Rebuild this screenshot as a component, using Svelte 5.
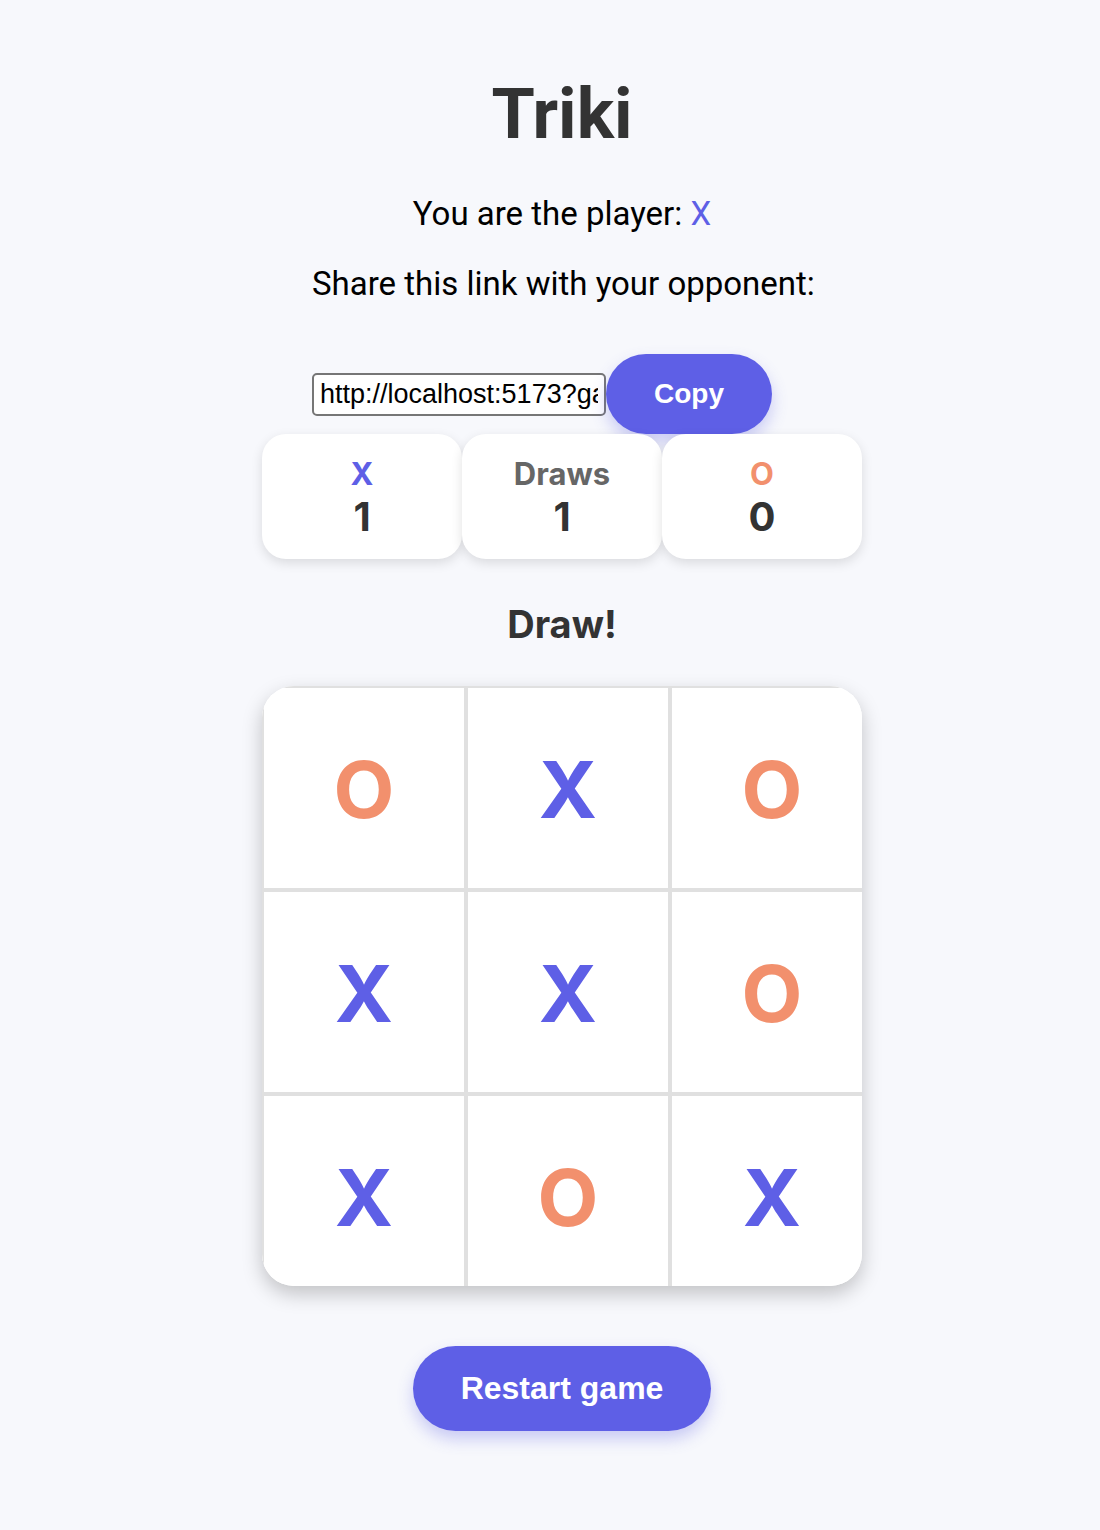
<script>
  const board = ['O', 'X', 'O', 'X', 'X', 'O', 'X', 'O', 'X'];
  const player = 'X';
  const stats = [
    { label: 'X', value: 1, tone: 'x' },
    { label: 'Draws', value: 1, tone: 'draws' },
    { label: 'O', value: 0, tone: 'o' }
  ];
  let link = $state('http://localhost:5173?game=4f7a2c');
</script>

<main>
  <h1>Triki</h1>
  <p>You are the player: <span class="x">{player}</span></p>
  <div class="share">
    <label for="share-link">Share this link with your opponent:</label>
    <div class="link-row">
      <input id="share-link" type="text" readonly value={link} />
      <button class="pill copy" type="button">Copy</button>
    </div>
  </div>

  <section class="stats" aria-label="Score">
    {#each stats as stat}
      <div class="stat">
        <span class="stat-label {stat.tone}">{stat.label}</span>
        <span class="stat-value">{stat.value}</span>
      </div>
    {/each}
  </section>

  <h2>Draw!</h2>

  <div class="board">
    {#each board as mark}
      <button class="cell {mark.toLowerCase()}" type="button">{mark}</button>
    {/each}
  </div>

  <button class="pill restart" type="button">Restart game</button>
</main>

<style>
  :global(body) {
    margin: 0;
    background: #f7f8fc;
  }
  main {
    display: flex;
    flex-direction: column;
    align-items: center;
    padding: 72px 0 100px 24px;
    font-family: Inter, 'Liberation Sans', sans-serif;
    font-size: 31px;
    line-height: 38px;
    color: #000;
  }
  h1 {
    margin: 0 0 39px;
    font-family: Roboto, 'Liberation Sans', sans-serif;
    font-size: 70px;
    line-height: 84px;
    font-weight: 700;
    color: #333;
  }
  p {
    margin: 0 0 32px;
  }
  p,
  label {
    font-family: Roboto, 'Liberation Sans', sans-serif;
    font-size: 33px;
    white-space: nowrap;
  }
  .x {
    color: #5e5fe6;
  }
  .o {
    color: #f2906d;
  }
  .draws {
    color: #666;
  }
  .share {
    display: flex;
    flex-direction: column;
    gap: 51px;
    width: 500px;
  }
  .link-row {
    display: flex;
    align-items: center;
  }
  input {
    box-sizing: border-box;
    width: 294px;
    height: 43px;
    padding: 2px 6px;
    border: 2px solid #767676;
    border-radius: 5px;
    background: #fff;
    color: #000;
    font-family: 'Liberation Sans', Arial, sans-serif;
    font-size: 27px;
  }
  .pill {
    border: 0;
    border-radius: 50px;
    background: #5e5fe6;
    color: #fff;
    font-family: 'Liberation Sans', Arial, sans-serif;
    font-weight: 700;
    box-shadow: 0 8px 16px rgba(94, 95, 230, 0.3);
    cursor: pointer;
  }
  .copy {
    padding: 24px 48px;
    font-size: 28px;
    line-height: 32px;
  }
  .stats {
    display: flex;
    margin-bottom: 43px;
  }
  .stat {
    position: relative;
    box-sizing: border-box;
    display: flex;
    flex-direction: column;
    align-items: center;
    width: 200px;
    padding: 21px 24px 19px;
    border-radius: 24px;
    background: #fff;
    box-shadow: 0 4px 12px rgba(0, 0, 0, 0.12);
  }
  .stat-label {
    font-weight: 700;
    line-height: 38px;
  }
  .stat-value {
    font-size: 40px;
    line-height: 47px;
    font-weight: 700;
    color: #333;
  }
  h2 {
    margin: 0 0 40px;
    font-size: 38px;
    line-height: 44px;
    font-weight: 700;
    color: #333;
  }
  .board {
    display: grid;
    grid-template-columns: repeat(3, 204px);
    grid-auto-rows: 204px;
    width: 600px;
    height: 600px;
    margin-bottom: 60px;
    border-radius: 32px;
    background: #fff;
    overflow: hidden;
    box-shadow: 0 8px 20px rgba(0, 0, 0, 0.22);
  }
  .cell {
    padding: 2px 0 0;
    border: 2px solid #e0e0e0;
    background: #fff;
    font-family: inherit;
    font-size: 79px;
    font-weight: 700;
    cursor: pointer;
  }
  .restart {
    padding: 24px 48px;
    font-size: 32px;
    line-height: 37px;
  }
</style>
